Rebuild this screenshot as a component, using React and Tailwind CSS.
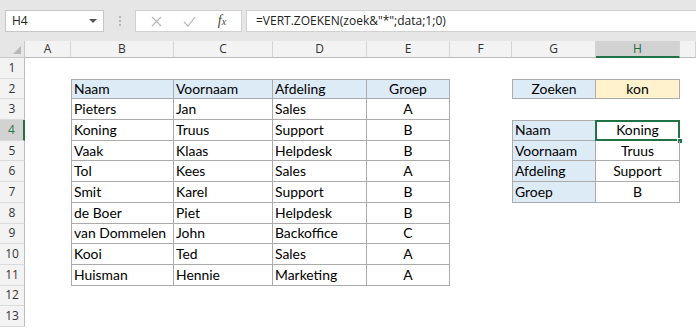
import React from "react";

const COLS = ["A", "B", "C", "D", "E", "F", "G", "H", ""];

const data = [
  ["Pieters", "Jan", "Sales", "A"],
  ["Koning", "Truus", "Support", "B"],
  ["Vaak", "Klaas", "Helpdesk", "B"],
  ["Tol", "Kees", "Sales", "A"],
  ["Smit", "Karel", "Support", "B"],
  ["de Boer", "Piet", "Helpdesk", "B"],
  ["van Dommelen", "John", "Backoffice", "C"],
  ["Kooi", "Ted", "Sales", "A"],
  ["Huisman", "Hennie", "Marketing", "A"],
];

const lookup = [
  ["Naam", "Koning"],
  ["Voornaam", "Truus"],
  ["Afdeling", "Support"],
  ["Groep", "B"],
];

// col: 1=A .. 9=I
function getCell(row, col) {
  const cell = { text: "", center: false, bg: "", t: false, l: false, rb: false };
  // main table B2:E11
  if (row >= 2 && row <= 11 && col >= 2 && col <= 5) {
    cell.rb = true;
    cell.t = row === 2;
    cell.l = col === 2;
    cell.center = col === 5;
    if (row === 2) {
      cell.text = ["Naam", "Voornaam", "Afdeling", "Groep"][col - 2];
      cell.bg = "bg-[#ddebf7]";
    } else {
      cell.text = data[row - 3][col - 2];
    }
  }
  // zoeken G2:H2
  if (row === 2 && (col === 7 || col === 8)) {
    cell.rb = true;
    cell.t = true;
    cell.l = col === 7;
    cell.center = true;
    cell.text = col === 7 ? "Zoeken" : "kon";
    cell.bg = col === 7 ? "bg-[#ddebf7]" : "bg-[#fff2cc]";
  }
  // result G4:H7
  if (row >= 4 && row <= 7 && (col === 7 || col === 8)) {
    cell.rb = true;
    cell.t = row === 4;
    cell.l = col === 7;
    cell.center = col === 8;
    cell.text = lookup[row - 4][col - 7];
    cell.bg = col === 7 ? "bg-[#ddebf7]" : "";
  }
  return cell;
}

function Toolbar() {
  return (
    <div className="h-[41px] bg-[#e6e6e6] flex items-start pt-[10px] pl-[5px] font-['Open_Sans',sans-serif] text-[12px] text-[#222]">
      <div className="w-[99px] h-[22px] bg-white border border-[#c6c6c6] flex items-center pl-[6px] pr-[6px] justify-between">
        <span>H4</span>
        <svg width="8" height="5" viewBox="0 0 8 5"><path d="M0 0h8L4 4z" fill="#555" /></svg>
      </div>
      <div className="w-[31px] h-[22px] flex flex-col items-center justify-center gap-[2px]">
        <span className="w-[2px] h-[2px] bg-[#b5b5b5]" />
        <span className="w-[2px] h-[2px] bg-[#b5b5b5]" />
        <span className="w-[2px] h-[2px] bg-[#b5b5b5]" />
      </div>
      <div className="w-[107px] h-[22px] bg-white border border-[#d0d0d0] flex items-center justify-around px-[4px]">
        <svg width="11" height="11" viewBox="0 0 11 11"><path d="M1 1l9 9M10 1l-9 9" stroke="#b8b8b8" strokeWidth="1.2" /></svg>
        <svg width="13" height="11" viewBox="0 0 13 11"><path d="M1 6l4 4 7-9" fill="none" stroke="#b8b8b8" strokeWidth="1.2" /></svg>
        <span className="font-['Liberation_Serif',serif] italic text-[14px] text-[#444] leading-none">f<span className="text-[10px]">x</span></span>
      </div>
      <div className="flex-1 ml-[4px] h-[22px] bg-white border border-[#d0d0d0] border-r-0 flex items-center pl-[9px]">
        =VERT.ZOEKEN(zoek&amp;"*";data;1;0)
      </div>
    </div>
  );
}

export default function App() {
  const rows = Array.from({ length: 13 }, (_, i) => i + 1);
  return (
    <div className="w-[696px] h-[329px] overflow-hidden bg-white">
      <Toolbar />
      <div className="grid grid-cols-[25px_46px_103px_99px_94px_83px_62px_84px_84px_1fr] grid-rows-[17px_repeat(13,20.7px)]">
        {/* corner */}
        <div className="bg-[#e6e6e6] border-r border-b border-[#c9c9c9] flex items-end justify-end pr-[3px] pb-[3px]">
          <svg width="8" height="8" viewBox="0 0 8 8"><path d="M8 0v8H0z" fill="#b8b8b8" /></svg>
        </div>
        {COLS.map((c) => (
          <div
            key={c || "I"}
            className={
              "flex items-center justify-center font-['Open_Sans',sans-serif] text-[12px] border-r border-[#d4d4d4] " +
              (c === "H"
                ? "bg-[#d2d2d2] text-[#1f6b3f] border-b-2 border-b-[#217346]"
                : "bg-[#f3f3f3] text-[#333] border-b border-b-[#bdbdbd]")
            }
          >
            {c}
          </div>
        ))}
        {rows.map((r) => (
          <React.Fragment key={r}>
            <div
              className={
                "flex items-center justify-center font-['Open_Sans',sans-serif] text-[12px] border-b border-[#dadada] " +
                (r === 4
                  ? "bg-[#d2d2d2] text-[#2a7a4b] border-r-2 border-r-[#217346]"
                  : "bg-[#f3f3f3] text-[#333] border-r border-r-[#bdbdbd]")
              }
            >
              {r}
            </div>
            {COLS.map((_, ci) => {
              const col = ci + 1;
              const cell = getCell(r, col);
              const selected = r === 4 && col === 8;
              return (
                <div
                  key={col}
                  className={
                    "relative flex items-center px-[2px] pt-[1px] font-['Lato',sans-serif] text-[13.9px] text-black whitespace-nowrap overflow-visible border-[#ababab] " +
                    (cell.center ? "justify-center " : "") +
                    (cell.bg ? cell.bg + " " : "") +
                    (cell.rb ? "border-r border-b " : "") +
                    (cell.t ? "border-t " : "") +
                    (cell.l ? "border-l " : "")
                  }
                >
                  {cell.text}
                  {selected && (
                    <>
                      <div className="absolute -left-px -top-px -right-px -bottom-px border-2 border-[#217346]" />
                      <div className="absolute -right-[4px] -bottom-[4px] w-[6px] h-[6px] bg-[#217346] border border-white" />
                    </>
                  )}
                </div>
              );
            })}
          </React.Fragment>
        ))}
      </div>
    </div>
  );
}
